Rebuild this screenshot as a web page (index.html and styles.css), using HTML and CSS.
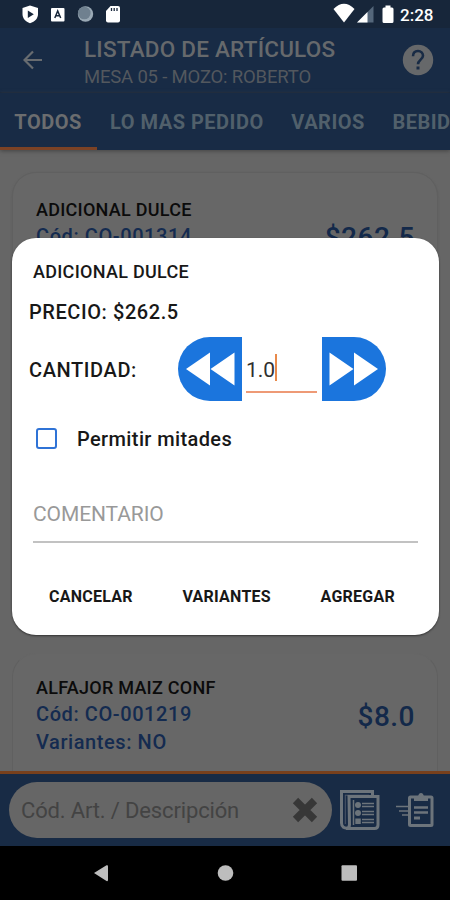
FILE: index.html
```html
<!DOCTYPE html>
<html lang="es">
<head>
<meta charset="utf-8">
<title>Listado de artículos</title>
<link rel="stylesheet" href="styles.css">
</head>
<body>
<div class="screen">
  <div class="status">
    <svg class="status-left" width="110" height="28" viewBox="0 0 110 28">
      <path fill="#fff" d="M15 5.500 23 8v6c0 4.500-3 7.500-8 9.300C10.500 21.500 7.500 18.500 7.500 14V8z"/>
      <path fill="#17263a" d="M12.800 10.500v7.500l6-3.700z"/>
      <rect x="36" y="8" width="13.500" height="13.500" rx="1" fill="#fff"/>
      <path d="m39.800 18 2.900-7 3 7m-5-2.300h4" fill="none" stroke="#17263a" stroke-width="1.500"/>
      <circle cx="70.500" cy="14" r="7.700" fill="#9aa9b5"/>
      <circle cx="69.300" cy="13" r="6.300" fill="#6f808f"/>
      <path d="M95.500 6H103q2 0 2 2v12.500q0 2-2 2H93q-2 0-2-2V11z" fill="#fff"/>
      <path d="M96.500 8v3m2.700-3v3M102 8v3" stroke="#17263a" stroke-width="1.300"/>
    </svg>
    <svg class="status-right" width="65" height="28" viewBox="0 0 65 28">
      <path fill="#fff" d="M2.500 9Q13-1.500 23.500 9L13 22.500z"/>
      <path fill="#55677b" d="M42.500 6v16.500H26z"/>
      <path fill="#fff" d="M36.500 12v10.500H26z"/>
      <path fill="#fff" d="M54.500 5.500h5v2h1.500q1.500 0 1.500 1.500v12.500q0 1.500-1.500 1.500h-8q-1.500 0-1.500-1.500V9q0-1.500 1.500-1.500h1.500z"/>
    </svg>
    <span class="clock">2:28</span>
  </div>
  <header class="toolbar">
    <svg class="back" width="20" height="20" viewBox="0 0 20 20"><path d="M19 10H2M10 1.500 1.500 10l8.500 8.500" fill="none" stroke="#686c70" stroke-width="2.200"/></svg>
    <div class="titles">
      <h1 class="title">LISTADO DE ARTÍCULOS</h1>
      <p class="subtitle">MESA 05 - MOZO: ROBERTO</p>
    </div>
    <svg class="help" width="32" height="32" viewBox="0 0 32 32">
      <circle cx="16" cy="16" r="15.200" fill="#66686a"/>
      <path d="M11 12.300C11 9 13 7 16 7s5 2 5 4.800c0 3.600-5 4.200-5 8.400" fill="none" stroke="#182b45" stroke-width="2.600"/>
      <rect x="14.500" y="22.500" width="3" height="3" fill="#182b45"/>
    </svg>
  </header>
  <nav class="tabs">
    <div class="tab active">TODOS</div>
    <div class="tab">LO MAS PEDIDO</div>
    <div class="tab">VARIOS</div>
    <div class="tab">BEBID</div>
  </nav>
  <main class="list">
    <article class="card">
      <div class="info">
        <div class="name">ADICIONAL DULCE</div>
        <div class="meta">Cód: CO-001314</div>
      </div>
      <div class="price">$262.5</div>
    </article>
    <article class="card second">
      <div class="info">
        <div class="name">ALFAJOR MAIZ CONF</div>
        <div class="meta">Cód: CO-001219</div>
        <div class="meta">Variantes: NO</div>
      </div>
      <div class="price">$8.0</div>
    </article>
  </main>
  <footer class="search-bar">
    <div class="search">
      <span class="placeholder">Cód. Art. / Descripción</span>
      <svg class="clear" width="26" height="26" viewBox="0 0 26 26"><path d="m3.500 3.500 19 19m0-19-19 19" stroke="#373737" stroke-width="7.500"/></svg>
    </div>
    <svg class="notes" width="42" height="42" viewBox="0 0 42 42" fill="none" stroke="#6c747b">
      <path d="M10 39Q2.500 40 2.500 34V2.500h31V8" stroke-width="3"/>
      <path d="M6 6.200h24M6.300 6v29" stroke-width="1" stroke="#4d5868"/>
      <path d="M10 7.500h29V36q0 3.500-3.500 3.500H7q3.500 0 3.500-4z" stroke-width="3"/>
      <path d="M14.500 11v25" stroke-width="1.500"/>
      <g fill="#6c747b" stroke="none"><circle cx="19" cy="16" r="3"/><circle cx="19" cy="24" r="3"/><rect x="16.300" y="29.500" width="5.500" height="5.500"/></g>
      <path d="M23 14.500h12M23 17.500h12M23 22.500h12M23 25.500h12M23 30.500h12M23 33.500h12" stroke-width="1.600"/>
    </svg>
    <svg class="send" width="38" height="36" viewBox="0 0 38 36" fill="none" stroke="#6c747b">
      <rect x="13.500" y="5" width="22.500" height="28.500" rx="1" stroke-width="3"/>
      <path d="M18 9V5h4q.5-4 3-4t3 4h4v4z" fill="#6c747b" stroke="none"/>
      <path d="M18 15.500h14M18 20.500h14" stroke-width="2.600"/><path d="M18 26h6" stroke-width="3"/>
      <path d="M0 14.500h12M3 19h9M6 23h6" stroke-width="1.700"/>
    </svg>
  </footer>
  <div class="system-nav">
    <svg width="450" height="54" viewBox="0 0 450 54" fill="#bdbdbd">
      <path d="M94 27 106.500 19.300q1.500-.6 1.500 1v13.800q0 1.600-1.500 1z"/>
      <circle cx="225.500" cy="27" r="7.800"/>
      <rect x="341.500" y="19.300" width="15.500" height="15.500" rx="1"/>
    </svg>
  </div>
  <section class="dialog">
    <div class="dialog-title">ADICIONAL DULCE</div>
    <div class="dialog-price">PRECIO: $262.5</div>
    <div class="quantity">
      <span class="qty-label">CANTIDAD:</span>
      <div class="step left"><svg width="64" height="64" viewBox="0 0 64 64"><path d="M8 32 32 15.500v33zM32.500 32 56.500 15.500v33z" fill="#fff"/></svg></div>
      <div class="qty-input"><span class="qty-value">1.0</span><i class="caret"></i></div>
      <div class="step right"><svg width="64" height="64" viewBox="0 0 64 64"><path d="M56 32 32 15.500v33zM31.500 32 7.500 15.500v33z" fill="#fff"/></svg></div>
    </div>
    <div class="halves"><i class="box"></i><span class="halves-label">Permitir mitades</span></div>
    <div class="comment">COMENTARIO</div>
    <div class="actions"><span>CANCELAR</span><span>VARIANTES</span><span>AGREGAR</span></div>
  </section>
</div>
</body>
</html>
```
FILE: styles.css
```css
* { box-sizing: border-box; }
body { margin: 0; font-family: Roboto, "Liberation Sans", sans-serif; background: #000; }
.screen { position: relative; width: 450px; height: 900px; overflow: hidden; display: flex; flex-direction: column; background: #666; white-space: nowrap; }
.status { height: 28px; background: #17263a; display: flex; align-items: center; padding-left: 15px; }
.status-left { width: 110px; flex: none; margin-left: 0; }
.status-right { margin-left: 206px; flex: none; }
.clock { color: #fff; font-size: 17px; font-weight: 500; line-height: 28px; margin-left: 4px; padding-top: 1px; }
.toolbar { height: 65px; background: #182b45; display: flex; align-items: center; padding: 0 16px 0 23px; border-bottom: 1px solid #17273d; }
.titles { margin-left: 41px; flex: 1; }
.title { margin: 0; font-size: 22.5px; line-height: 28px; font-weight: 500; letter-spacing: 0.22px; color: #66696c; padding-top: 4px; }
.subtitle { margin: 0; font-size: 18.5px; line-height: 26px; letter-spacing: -0.18px; color: #53585e; padding-top: 1px; }
.tabs { height: 57px; background: #182b45; display: flex; flex: none; box-shadow: 0 1px 4px #444; position: relative; }
.tab { padding: 1px 13.3px 0 14.3px; font-size: 20px; font-weight: 700; letter-spacing: 0.5px; line-height: 56px; color: #51606b; border-bottom: 3px solid transparent; }
.tab:nth-child(2) { padding-left: 13.3px; }
.tab:last-child { padding-right: 0; }
.tab.active { color: #6b6d6f; border-color: #7b4225; padding-right: 15px; }
.list { flex: 1; padding: 22px 12px 0; min-height: 0; overflow: hidden; }
.card { height: 459px; border-radius: 24px; border: 1px solid #606060; background: #676767; padding: 25px 22px 25px 23px; display: flex; justify-content: space-between; align-items: flex-start; box-shadow: 0 1px 2px #5b5b5b; }
.second { margin-top: 22px; padding-top: 22px; border-color: #666 #606060; box-shadow: none; }
.name { font-size: 18px; line-height: 24px; font-weight: 500; letter-spacing: 0.26px; color: #0b0b0b; }
.meta { font-size: 20px; line-height: 28px; font-weight: 500; letter-spacing: 0.58px; color: #142b50; }
.price { font-size: 28px; line-height: 34px; font-weight: 500; letter-spacing: 0.5px; color: #13294a; margin-top: 23px; }
.second .price { margin-top: 24px; }
.search-bar { height: 75px; background: #182b45; border-top: 3px solid #78401c; display: flex; align-items: center; padding: 0 15px 0 9px; }
.search { width: 323px; height: 56px; border-radius: 28px; background: #666; display: flex; align-items: center; justify-content: space-between; padding: 0 14px 0 12px; }
.placeholder { font-size: 22px; letter-spacing: -0.15px; color: #434343; }
.notes { margin-left: 7px; }
.send { margin-left: 15px; }
.system-nav { height: 54px; background: #000; flex: none; }
.system-nav svg { display: block; }
.dialog { position: absolute; left: 12px; top: 238px; width: 427px; height: 397px; border-radius: 24px; background: #fff; box-shadow: 0 1px 2px #333; color: #181818; font-weight: 500; display: flex; flex-direction: column; padding: 20px 21px 0 17px; }
.dialog-title { font-size: 18px; line-height: 28px; padding-left: 4px; letter-spacing: 0.28px; }
.dialog-price { font-size: 20px; line-height: 28px; margin-top: 12px; letter-spacing: 0.57px; }
.quantity { display: flex; align-items: center; height: 64px; margin-top: 11px; }
.qty-label { font-size: 20px; width: 149px; letter-spacing: 0.6px; padding-top: 2px; }
.step { width: 64px; height: 64px; background: #1b75dd; }
.step svg { display: block; }
.left { border-radius: 32px 0 0 32px; }
.right { border-radius: 0 32px 32px 0; }
.qty-input { width: 71px; height: 48px; margin: 0 5px 0 4px; border-bottom: 2px solid #ee9a76; display: flex; align-items: flex-start; padding-top: 4px; }
.qty-value { font-size: 21px; font-weight: 400; line-height: 40px; padding-top: 1px; color: #303030; }
.caret { width: 2px; height: 27px; background: #e8894a; margin-top: 5px; }
.halves { display: flex; align-items: center; height: 30px; margin-top: 22px; padding-left: 7px; }
.box { width: 21px; height: 21px; border: 2px solid #2f73d6; border-radius: 3px; }
.halves-label { font-size: 20px; margin-left: 20px; padding-top: 2px; letter-spacing: 0.38px; }
.comment { margin: 43px 0 0 4px; height: 47px; border-bottom: 2px solid #c2c2c2; color: #999; font-weight: 400; font-size: 21px; letter-spacing: -0.1px; line-height: 37px; }
.actions { display: flex; justify-content: space-between; margin: 42px 23px 0 20px; font-size: 16px; font-weight: 700; letter-spacing: 0.25px; line-height: 24px; }
```
